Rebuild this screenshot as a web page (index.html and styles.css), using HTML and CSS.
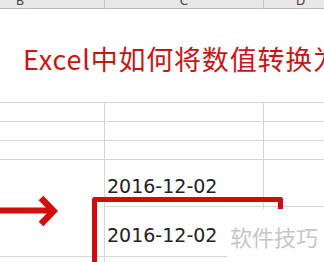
FILE: index.html
```html
<!DOCTYPE html>
<html lang="zh">
<head>
  <meta charset="UTF-8">
  <meta name="viewport" content="width=device-width, initial-scale=1.0">
  <title>Excel中如何将数值转换为日期</title>
  <link rel="stylesheet" href="styles.css">
</head>
<body>
  <div class="page">
    <div class="sheet">
      <!-- 列标题 -->
      <div class="col-head">B</div>
      <div class="col-head">C</div>
      <div class="col-head last">D</div>

      <!-- 合并的标题单元格 -->
      <div class="title-cell">Excel中如何将数值转换为日期</div>

      <div class="cell"></div><div class="cell"></div><div class="cell last"></div>
      <div class="cell"></div><div class="cell"></div><div class="cell last"></div>
      <div class="cell"></div><div class="cell"></div><div class="cell last"></div>

      <div class="cell tall"></div>
      <div class="cell date">2016-12-02</div>
      <div class="cell last"></div>
      <div class="cell date second">2016-12-02</div>
      <div class="cell last"></div>

      <div class="cell bottom"></div><div class="cell bottom"></div><div class="cell bottom last"></div>
    </div>

    <svg class="marks" width="324" height="262" viewBox="0 0 324 262">
      <line x1="0" y1="210.5" x2="51" y2="210.5" stroke="#d40d0d" stroke-width="6"/>
      <polyline points="41,198 53.5,211 41,224" fill="none" stroke="#d40d0d" stroke-width="6.5"/>
      <path d="M94.5 262 V199.5 H280.5 V213" fill="none" stroke="#d10c0c" stroke-width="5" stroke-linejoin="round"/>
    </svg>

    <div class="watermark">软件技巧</div>
  </div>
</body>
</html>
```

FILE: styles.css
```css
body {
  margin: 0;
  padding: 0;
  background-color: white;
  font-family: 'DejaVu Sans', 'Noto Sans CJK SC', sans-serif;
}
.page {
  position: relative;
  width: 324px;
  height: 262px;
  overflow: hidden;
}
.sheet {
  display: grid;
  grid-template-columns: 105px 159px 60px;
  grid-template-rows: 9px 94px 19px 19px 19px 47px 50px 10px;
}
.col-head {
  box-sizing: border-box;
  background-color: #e8e8e8;
  border-right: 1px solid #c4c4c4;
  border-bottom: 1px solid #b8b8b8;
  color: #444;
  font-size: 12px;
  line-height: 2px;
  text-align: center;
  overflow: hidden;
}
.col-head:first-child {
  text-align: left;
  padding-left: 16px;
}
.col-head.last {
  border-right: none;
  text-align: left;
  padding-left: 32px;
}
.title-cell {
  grid-column: 1 / 4;
  box-sizing: border-box;
  border-bottom: 1px solid #d6d6d6;
  padding: 35px 0 0 23px;
  color: #cc1414;
  font-family: 'Noto Sans CJK SC', sans-serif;
  font-size: 27px;
  line-height: 30px;
  letter-spacing: 0.8px;
  white-space: nowrap;
  overflow: hidden;
}
.cell {
  box-sizing: border-box;
  border-right: 1px solid #d6d6d6;
  border-bottom: 1px solid #d6d6d6;
}
.cell.last {
  border-right: none;
}
.cell.tall {
  grid-row: span 2;
}
.cell.bottom {
  border-bottom: none;
}
.date {
  display: flex;
  align-items: flex-end;
  padding: 0 0 10px 2px;
  color: #222;
  font-size: 19px;
  line-height: 20px;
  white-space: nowrap;
}
.date.second {
  padding-bottom: 11px;
}
.marks {
  position: absolute;
  left: 0;
  top: 0;
}
.watermark {
  position: absolute;
  left: 227px;
  top: 209px;
  width: 97px;
  height: 53px;
  background-color: white;
  box-sizing: border-box;
  padding: 14px 0 0 3px;
  color: #c6c6c6;
  font-family: 'Noto Sans CJK SC', sans-serif;
  font-size: 22px;
  line-height: 26px;
  white-space: nowrap;
}
```
